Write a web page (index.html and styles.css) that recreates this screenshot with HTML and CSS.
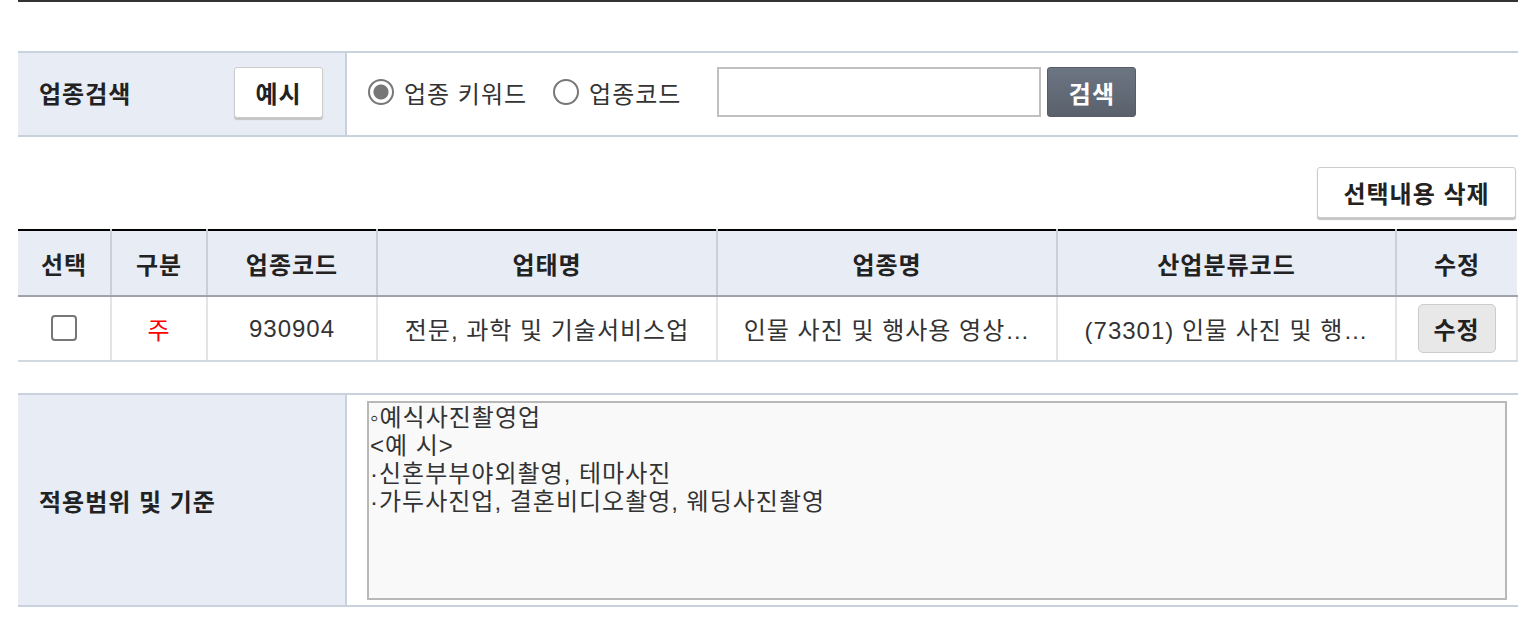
FILE: index.html
```html
<!DOCTYPE html>
<html lang="ko">
<head>
    <meta charset="UTF-8">
    <meta name="viewport" content="width=device-width, initial-scale=1.0">
    <title>업종 검색</title>
    <link rel="stylesheet" href="styles.css">
</head>
<body>

<div class="wrap">

    <!-- 업종 검색 -->
    <div class="searchBox">
        <div class="thLabel">
            <span>업종검색</span>
            <button type="button" class="btnWhite">예시</button>
        </div>
        <div class="tdField">
            <label class="radio"><input type="radio" name="stype" checked> 업종 키워드</label>
            <label class="radio"><input type="radio" name="stype"> 업종코드</label>
            <input type="text" class="txtSearch">
            <button type="button" class="btnDark">검색</button>
        </div>
    </div>

    <div class="btnArea">
        <button type="button" class="btnWhite btnDel">선택내용 삭제</button>
    </div>

    <!-- 선택 업종 목록 -->
    <table class="listTable">
        <colgroup>
            <col style="width:93px">
            <col style="width:96px">
            <col style="width:170px">
            <col style="width:340px">
            <col style="width:340px">
            <col style="width:339px">
            <col>
        </colgroup>
        <tr>
            <th>선택</th>
            <th>구분</th>
            <th>업종코드</th>
            <th>업태명</th>
            <th>업종명</th>
            <th>산업분류코드</th>
            <th>수정</th>
        </tr>
        <tr>
            <td><input type="checkbox" class="chk"></td>
            <td class="red">주</td>
            <td>930904</td>
            <td>전문, 과학 및 기술서비스업</td>
            <td title="인물 사진 및 행사용 영상 촬영업">인물 사진 및 행사용 영상…</td>
            <td title="(73301) 인물 사진 및 행사용 영상 촬영업">(73301) 인물 사진 및 행…</td>
            <td><button type="button" class="btnGray">수정</button></td>
        </tr>
    </table>

    <!-- 적용범위 -->
    <div class="scopeBox">
        <div class="thLabel"><span>적용범위 및 기준</span></div>
        <div class="tdArea">
            <textarea readonly>◦예식사진촬영업
&lt;예 시&gt;
·신혼부부야외촬영, 테마사진
·가두사진업, 결혼비디오촬영, 웨딩사진촬영</textarea>
        </div>
    </div>

</div>

</body>
</html>
```

FILE: styles.css
```css
body {
    margin: 0;
    font-family: "Liberation Sans", "Noto Sans CJK KR", sans-serif;
    font-size: 24px;
    letter-spacing: 1px;
    color: #222;
}
.wrap {
    width: 1500px;
    margin-left: 18px;
    border-top: 2px solid #333;
    padding-top: 49px;
}

/* search */
.searchBox, .scopeBox {
    display: flex;
    border-top: 2px solid #c8d2dc;
    border-bottom: 2px solid #c8d2dc;
}
.searchBox {
    height: 82px;
}
.searchBox .thLabel, .tdField {
    padding-bottom: 4px;
}
.thLabel {
    width: 329px;
    box-sizing: border-box;
    padding: 0 22px 0 21px;
    background-color: #e8ecf4;
    border-right: 2px solid #c8d2dc;
    display: flex;
    align-items: center;
    justify-content: space-between;
    font-weight: bold;
}
.tdField {
    display: flex;
    align-items: center;
    padding-left: 21px;
}
.radio {
    display: flex;
    align-items: center;
    gap: 10px;
    margin-right: 26px;
    color: #333;
}
.radio input {
    appearance: none;
    margin: 0;
    width: 26px;
    height: 26px;
    border: 2px solid #777;
    border-radius: 50%;
    box-sizing: border-box;
}
.radio input:checked {
    background: radial-gradient(circle, #777 0 7px, #fff 8px);
}
.txtSearch {
    width: 324px;
    height: 50px;
    box-sizing: border-box;
    margin-left: 10px;
    border: 2px solid #c0c0c0;
    font-size: 20px;
}
button {
    font-family: inherit;
    font-size: 24px;
    letter-spacing: 1px;
    font-weight: bold;
    cursor: pointer;
}
.btnWhite {
    width: 89px;
    height: 51px;
    padding: 0;
    color: #222;
    background-color: #fff;
    border: 1px solid #ccc;
    border-radius: 3px;
    box-shadow: 0 2px 1px #c4c4c4;
}
.btnDark {
    width: 89px;
    height: 50px;
    margin-left: 6px;
    color: #fff;
    background: linear-gradient(#6c7582, #5a616d);
    border: 1px solid #565d68;
    border-radius: 3px;
}
.btnArea {
    display: flex;
    justify-content: flex-end;
    padding: 30px 2px 11px 0;
}
.btnDel {
    width: 199px;
}

/* list */
.listTable {
    width: 100%;
    table-layout: fixed;
    border-collapse: collapse;
    border-top: 2px solid #000;
    text-align: center;
}
.listTable th {
    height: 64px;
    background-color: #e8ecf4;
    border-left: 2px solid #c8d0dc;
    border-bottom: 2px solid #a0a4aa;
    font-weight: bold;
    padding: 0;
}
.listTable td {
    height: 63px;
    border-left: 2px solid #e2e4e8;
    border-bottom: 2px solid #d0d8e0;
    color: #333;
    padding: 0;
    white-space: nowrap;
}
.listTable th:first-child, .listTable td:first-child {
    border-left: none;
}
.listTable td:last-child {
    border-right: 2px solid #e2e4e8;
}
.listTable td.red {
    color: #f00;
}
.chk {
    appearance: none;
    margin: 4px 0 0;
    width: 26px;
    height: 26px;
    border: 2px solid #777;
    border-radius: 4px;
}
.btnGray {
    width: 78px;
    height: 49px;
    padding: 0;
    color: #222;
    background-color: #e8e8e8;
    border: 1px solid #ccc;
    border-radius: 5px;
}

/* scope */
.scopeBox {
    margin-top: 31px;
    height: 210px;
}
.tdArea {
    flex: 1;
    padding: 6px 11px 5px 20px;
}
textarea {
    width: 100%;
    height: 100%;
    box-sizing: border-box;
    margin: 0;
    padding: 1px 1px 0;
    border: 2px solid #b8b8b8;
    background-color: #f9f9f9;
    font-family: inherit;
    font-size: 24px;
    letter-spacing: 1px;
    line-height: 28px;
    color: #333;
    resize: none;
}
```
